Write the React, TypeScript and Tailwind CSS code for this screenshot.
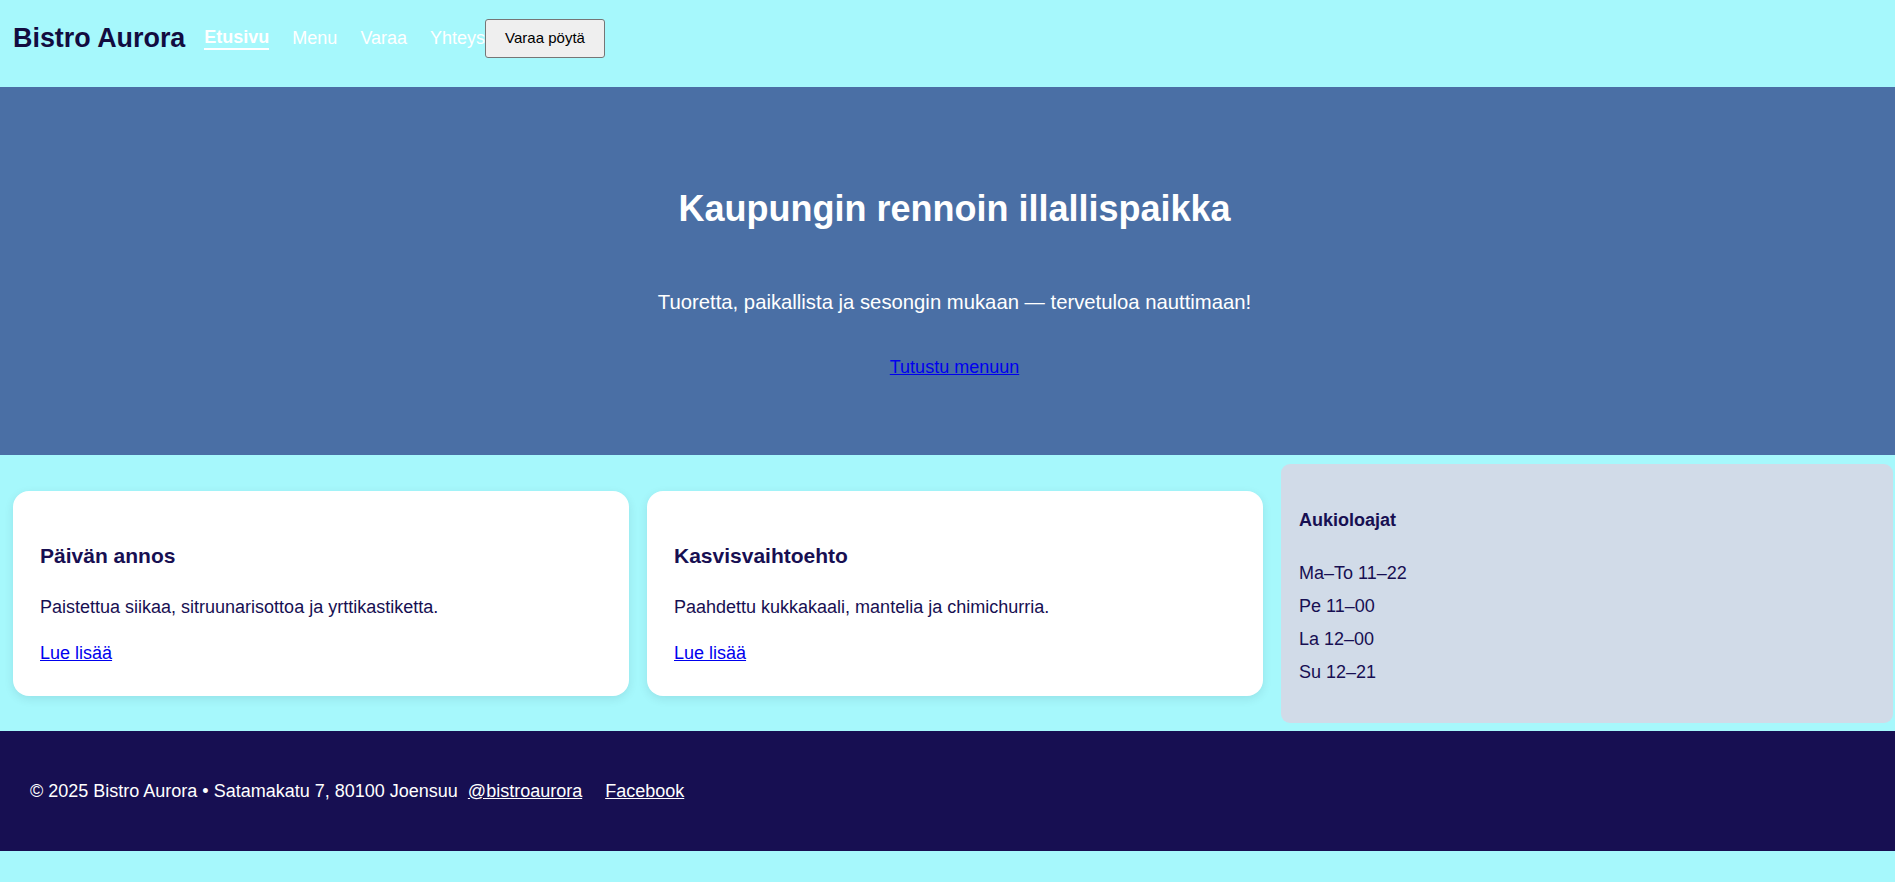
import React from "react";

export default function App() {
  return (
    <div className="min-h-[882px] bg-[#a6f8fc] font-['Liberation_Sans',Arial,sans-serif] text-[18px] text-[#170f52]">
      <header className="flex h-[87px] items-center pb-[10px] pl-[13px]">
        <div className="text-[26.9px] font-bold leading-[1.15] text-[#120c3f]">Bistro Aurora</div>
        <nav className="ml-[19px] flex items-center">
          <ul className="flex items-center gap-[23px] text-white">
            <li>
              <a href="#" className="block border-b-2 border-white font-bold leading-[1.15]">Etusivu</a>
            </li>
            <li>
              <a href="#" className="block leading-[1.15]">Menu</a>
            </li>
            <li>
              <a href="#" className="block leading-[1.15]">Varaa</a>
            </li>
            <li>
              <a href="#" className="block leading-[1.15]">Yhteys</a>
            </li>
          </ul>
          <button className="h-[39px] rounded-[3px] border border-[#767676] bg-[#efefef] px-[19px] text-[15px] text-black">
            Varaa pöytä
          </button>
        </nav>
      </header>

      <section className="flex h-[368px] flex-col items-center bg-[#4a6fa5] pl-[14px] pt-[100px] text-center text-white">
        <h1 className="text-[36px] font-bold leading-[44px]">Kaupungin rennoin illallispaikka</h1>
        <p className="mt-[59px] text-[20.3px] leading-[24px]">
          Tuoretta, paikallista ja sesongin mukaan — tervetuloa nauttimaan!
        </p>
        <a href="#" className="mt-[42px] text-[18px] leading-[22px] text-[#0000ee] underline">
          Tutustu menuun
        </a>
      </section>

      <main className="grid grid-cols-[616px_616px_1fr] items-center gap-[18px] pb-[8px] pl-[13px] pr-[2px] pt-[9px]">
        <article className="flex h-[205px] flex-col rounded-[16px] bg-white px-[27px] pt-[48px] shadow-[0_3px_10px_rgba(0,40,60,0.10)]">
          <h3 className="text-[21px] font-bold leading-[34px]">Päivän annos</h3>
          <p className="mt-[20px] leading-[28px]">Paistettua siikaa, sitruunarisottoa ja yrttikastiketta.</p>
          <a href="#" className="mt-[18px] self-start leading-[28px] text-[#0000ee] underline">Lue lisää</a>
        </article>
        <article className="flex h-[205px] flex-col rounded-[16px] bg-white px-[27px] pt-[48px] shadow-[0_3px_10px_rgba(0,40,60,0.10)]">
          <h3 className="text-[21px] font-bold leading-[34px]">Kasvisvaihtoehto</h3>
          <p className="mt-[20px] leading-[28px]">Paahdettu kukkakaali, mantelia ja chimichurria.</p>
          <a href="#" className="mt-[18px] self-start leading-[28px] text-[#0000ee] underline">Lue lisää</a>
        </article>
        <aside className="flex h-[259px] flex-col rounded-[9px] bg-[#d1dbe8] px-[18px] pt-[42px]">
          <h4 className="font-bold leading-[28px]">Aukioloajat</h4>
          <ul className="mt-[25px] flex flex-col gap-[5px] leading-[28px]">
            <li>Ma–To 11–22</li>
            <li>Pe 11–00</li>
            <li>La 12–00</li>
            <li>Su 12–21</li>
          </ul>
        </aside>
      </main>

      <footer className="flex h-[120px] items-center bg-[#170f52] pl-[30px] text-white">
        <p className="leading-[28px]">
          © 2025 Bistro Aurora • Satamakatu 7, 80100 Joensuu{" "}
          <a href="#" className="ml-[5px] underline">@bistroaurora</a>
          <a href="#" className="ml-[23px] underline">Facebook</a>
        </p>
      </footer>
    </div>
  );
}
